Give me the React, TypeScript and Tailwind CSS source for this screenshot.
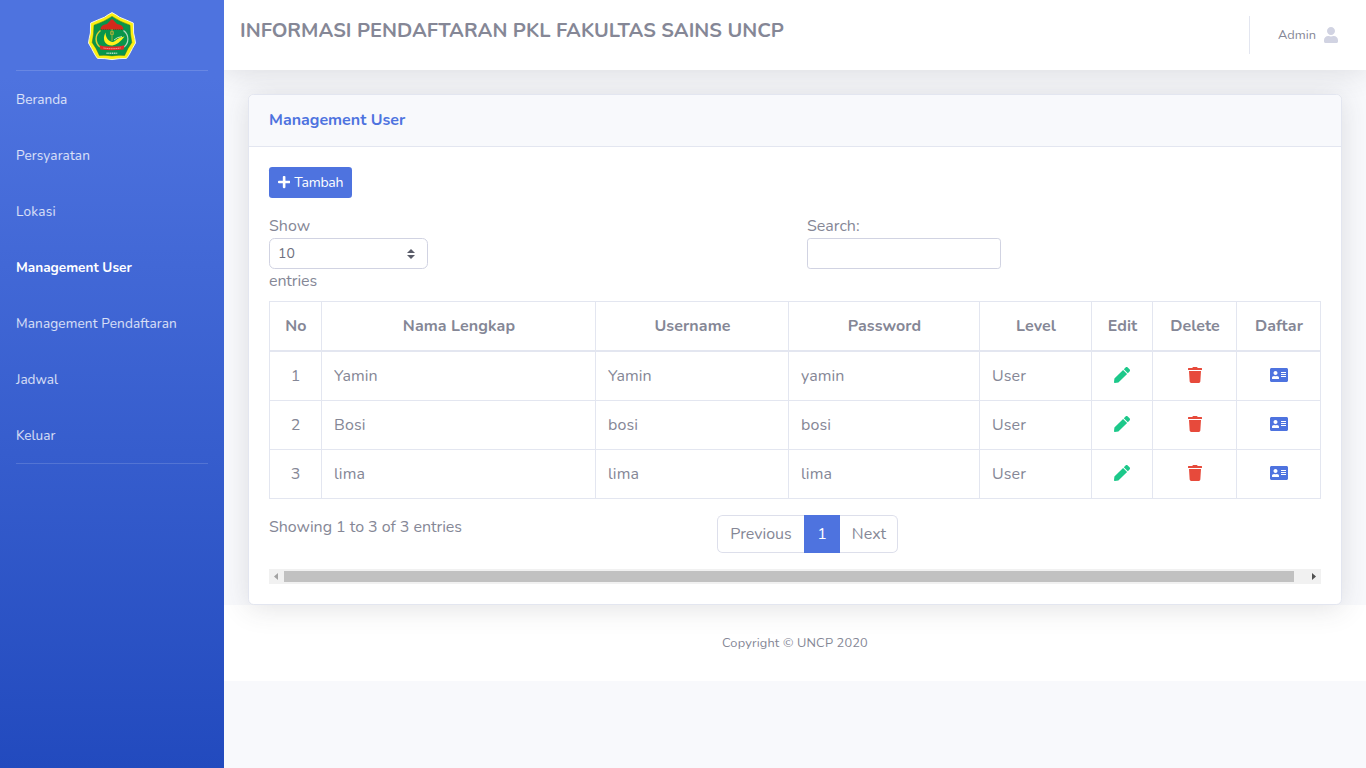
import { FaAddressCard, FaPen, FaPlus, FaTrash, FaUser } from "react-icons/fa";

const menu = [
  { label: "Beranda" },
  { label: "Persyaratan", tracking: "tracking-[0.14px]" },
  { label: "Lokasi", tracking: "tracking-[0.25px]" },
  { label: "Management User", active: true },
  { label: "Management Pendaftaran", tracking: "tracking-[0.13px]" },
  { label: "Jadwal" },
  { label: "Keluar" },
];

const users = [
  { name: "Yamin", username: "Yamin", password: "yamin", level: "User" },
  { name: "Bosi", username: "bosi", password: "bosi", level: "User" },
  { name: "lima", username: "lima", password: "lima", level: "User" },
];

const headings = ["No", "Nama Lengkap", "Username", "Password", "Level", "Edit", "Delete", "Daftar"];

function Logo() {
  return (
    <svg viewBox="0 0 50 50" className="size-[50px]" aria-hidden="true">
      <path d="M25 1.6Q29 3.6 32.5 6.200Q39 8.800 46.300 12Q46.600 17 46.600 22Q48 27.500 48.500 32Q45 38 43 42Q41.500 45 39.500 47.400Q32 47.300 25 48.600Q18 47.300 10.500 47.400Q8.500 45 7 42Q5 38 1.500 32Q2 27.500 3.400 22Q3.400 17 3.700 12Q11 8.800 17.500 6.200Q21 3.600 25 1.600Z" fill="#fbf010" stroke="#f4f4ea" strokeWidth="1" />
      <path d="M25 5.400Q32.500 10.600 43 14.200Q43 23 44.800 31.500Q40.500 37.500 37.600 44.400Q31 43.900 25 44.900Q19 43.900 12.400 44.400Q9.500 37.500 5.200 31.500Q7 23 7 14.200Q17.500 10.600 25 5.400Z" fill="#08954a" stroke="#3c6b25" strokeWidth=".5" />
      <path d="M13.500 19.500C7.500 24 8 32 13 36" fill="none" stroke="#d5cf35" strokeWidth="1.500" />
      <path d="M36.500 19.500C42.500 24 42 32 37 36" fill="none" stroke="#b4d9c0" strokeWidth="1.200" />
      <path d="M13.500 18.500Q13.500 13.800 20 13L24.500 8.300h1L30 13Q36.500 13.800 36.500 18.500Z" fill="#d42a1c" />
      <path d="M14 18.500h22" stroke="#8d3417" strokeWidth="1" strokeDasharray="1 1" />
      <path d="M25 18v12M23.600 20.500h2.800v3h-2.800z" fill="none" stroke="#9dac3b" strokeWidth="1" />
      <path d="M18.500 21.500C14.500 29 18.500 35 25.500 34.500Q31.500 33.500 37.500 25.500Q31 26.500 28 30Q25 32 22 29.500Q18.500 26.500 18.500 21.500Z" fill="#fff21c" />
      <path d="M27 29Q30 26 35 25.600" fill="none" stroke="#f2f7d5" strokeWidth=".8" />
      <path d="M12.500 34.200Q18 36 25 35.500Q32 36 37.500 34.200L36.600 38.500Q25 40 13.400 38.500Z" fill="#e52b28" />
      <path d="M16.500 37Q25 38.400 33.500 37" fill="none" stroke="#f3bcb4" strokeWidth=".9" strokeDasharray="1.200 .6" />
      <path d="M19.500 42.200h11" stroke="#b7dfc4" strokeWidth="1.500" strokeDasharray="1.200 .6" />
    </svg>
  );
}

function Sidebar() {
  return (
    <aside className="flex w-56 shrink-0 flex-col bg-linear-to-b from-[#4e73df] from-10% to-[#224abe] px-4">
      <div className="flex h-[70px] items-center justify-center pt-0.5">
        <Logo />
      </div>
      <hr className="border-white/15" />
      <nav className="flex flex-col">
        {menu.map(({ label, active, tracking = "" }) => (
          <a
            key={label}
            href="#"
            className={`flex h-14 items-center pt-0.5 text-[13.6px] ${active ? "font-bold text-white" : "text-white/80"} ${tracking}`}
          >
            {label}
          </a>
        ))}
      </nav>
      <hr className="border-white/15" />
    </aside>
  );
}

function Topbar() {
  return (
    <header className="relative flex h-[70px] justify-between bg-white pl-4 pr-7 shadow-[0_2.4px_28px_0_rgba(58,59,69,0.15)]">
      <h1 className="pt-[19px] text-xl leading-6 font-bold tracking-[0.02px]">INFORMASI PENDAFTARAN PKL FAKULTAS SAINS UNCP</h1>
      <div className="flex items-center">
        <div className="h-[38px] border-l border-[#e3e6f0]" />
        <span className="ml-7 pt-0.5 text-[12.8px]">Admin</span>
        <FaUser className="ml-2 h-4 w-3.5 text-[#d1d3e2]" />
      </div>
    </header>
  );
}

function UserTable() {
  return (
    <table className="mt-2 w-[1052px] table-fixed border-collapse">
      <colgroup>
        <col className="w-[52px]" />
        <col className="w-[274px]" />
        <col className="w-[193px]" />
        <col className="w-[191px]" />
        <col className="w-[112px]" />
        <col className="w-[61px]" />
        <col className="w-[84px]" />
        <col className="w-[84px]" />
      </colgroup>
      <thead>
        <tr className="h-[49px]">
          {headings.map((h) => (
            <th key={h} className="border border-b-2 border-[#e3e6f0] pt-px pl-px text-center font-bold tracking-[0.08px]">
              {h}
            </th>
          ))}
        </tr>
      </thead>
      <tbody>
        {users.map((u, i) => (
          <tr key={u.name} className="h-[49px] *:border *:border-[#e3e6f0] *:px-3 first:h-[50px]">
            <td className="text-center">{i + 1}</td>
            <td className="tracking-[0.1px]">{u.name}</td>
            <td className="tracking-[0.1px]">{u.username}</td>
            <td className="tracking-[0.1px]">{u.password}</td>
            <td className="tracking-[0.1px]">{u.level}</td>
            <td><FaPen className="mx-auto -mt-0.5 size-4 text-[#1cc88a]" /></td>
            <td><FaTrash className="mx-auto -mt-0.5 h-4 w-3.5 text-[#e74a3b]" /></td>
            <td><FaAddressCard className="mx-auto -mt-0.5 h-4 w-[18px] text-[#4e73df]" /></td>
          </tr>
        ))}
      </tbody>
    </table>
  );
}

function ScrollBar() {
  return (
    <div className="mt-4 flex h-[15px] items-center bg-[#f1f1f1]">
      <svg viewBox="0 0 15 15" className="size-[15px] shrink-0"><path d="M9 4v7L5 7.500z" fill="#a3a3a3" /></svg>
      <div className="h-[11px] w-[1010px] bg-[#c1c1c1]" />
      <svg viewBox="0 0 15 15" className="ml-auto size-[15px] shrink-0"><path d="M6 4v7l4-3.500z" fill="#505050" /></svg>
    </div>
  );
}

export default function App() {
  return (
    <div className="flex h-screen overflow-hidden bg-[#f8f9fc] font-[Nunito,Lato,sans-serif] text-base text-[#858796]">
      <Sidebar />
      <div className="flex min-w-0 flex-1 flex-col overflow-hidden">
        <Topbar />
        <main className="relative px-6 pt-6">
          <section className="rounded-[5.6px] border border-[#e3e6f0] bg-white shadow-[0_2.4px_28px_0_rgba(58,59,69,0.15)]">
            <h2 className="flex h-[52px] items-center rounded-t-[5px] border-b border-[#e3e6f0] bg-[#f8f9fc] px-5 pb-0.5 font-bold text-[#4e73df]">
              Management User
            </h2>
            <div className="p-5">
              <button className="flex h-[31px] w-[83px] items-center gap-1 rounded-[3.2px] bg-[#4e73df] pl-[9px] text-sm tracking-[-0.2px] text-white">
                <FaPlus className="h-3.5 w-[12.25px] -translate-y-px" />
                Tambah
              </button>
              <div className="mt-4 grid grid-cols-[538px_1fr]">
                <label className="block">
                  Show
                  <span className="flex h-[31px] w-[159px] items-center justify-between rounded-[5.6px] border border-[#d1d3e2] pl-2 pr-3 text-sm text-[#6e707e]">
                    10
                    <svg viewBox="0 0 8 10" className="h-2.5 w-2"><path d="M4 0 0 4h8zM4 10 0 6h8z" fill="#5a5c69" /></svg>
                  </span>
                  <span className="tracking-[-0.12px]">entries</span>
                </label>
                <label className="block">
                  Search:
                  <span className="block h-[31px] w-[194px] rounded-[3.2px] border border-[#d1d3e2]" />
                </label>
              </div>
              <UserTable />
              <div className="mt-4 grid h-[38px] grid-cols-[448px_1fr]">
                <p className="tracking-[-0.05px]">Showing 1 to 3 of 3 entries</p>
                <div className="flex leading-[36px]">
                  <span className="w-[87px] rounded-l-[5.6px] border border-r-0 border-[#dddfeb] text-center">Previous</span>
                  <span className="w-9 border border-[#4e73df] bg-[#4e73df] text-center text-white">1</span>
                  <span className="w-[58px] rounded-r-[5.6px] border border-l-0 border-[#dddfeb] pl-px text-center">Next</span>
                </div>
              </div>
              <ScrollBar />
            </div>
          </section>
        </main>
        <footer className="flex h-[76px] items-center justify-center bg-white pt-0.5 text-[12.8px] tracking-[0.16px]">
          Copyright © UNCP 2020
        </footer>
      </div>
    </div>
  );
}
